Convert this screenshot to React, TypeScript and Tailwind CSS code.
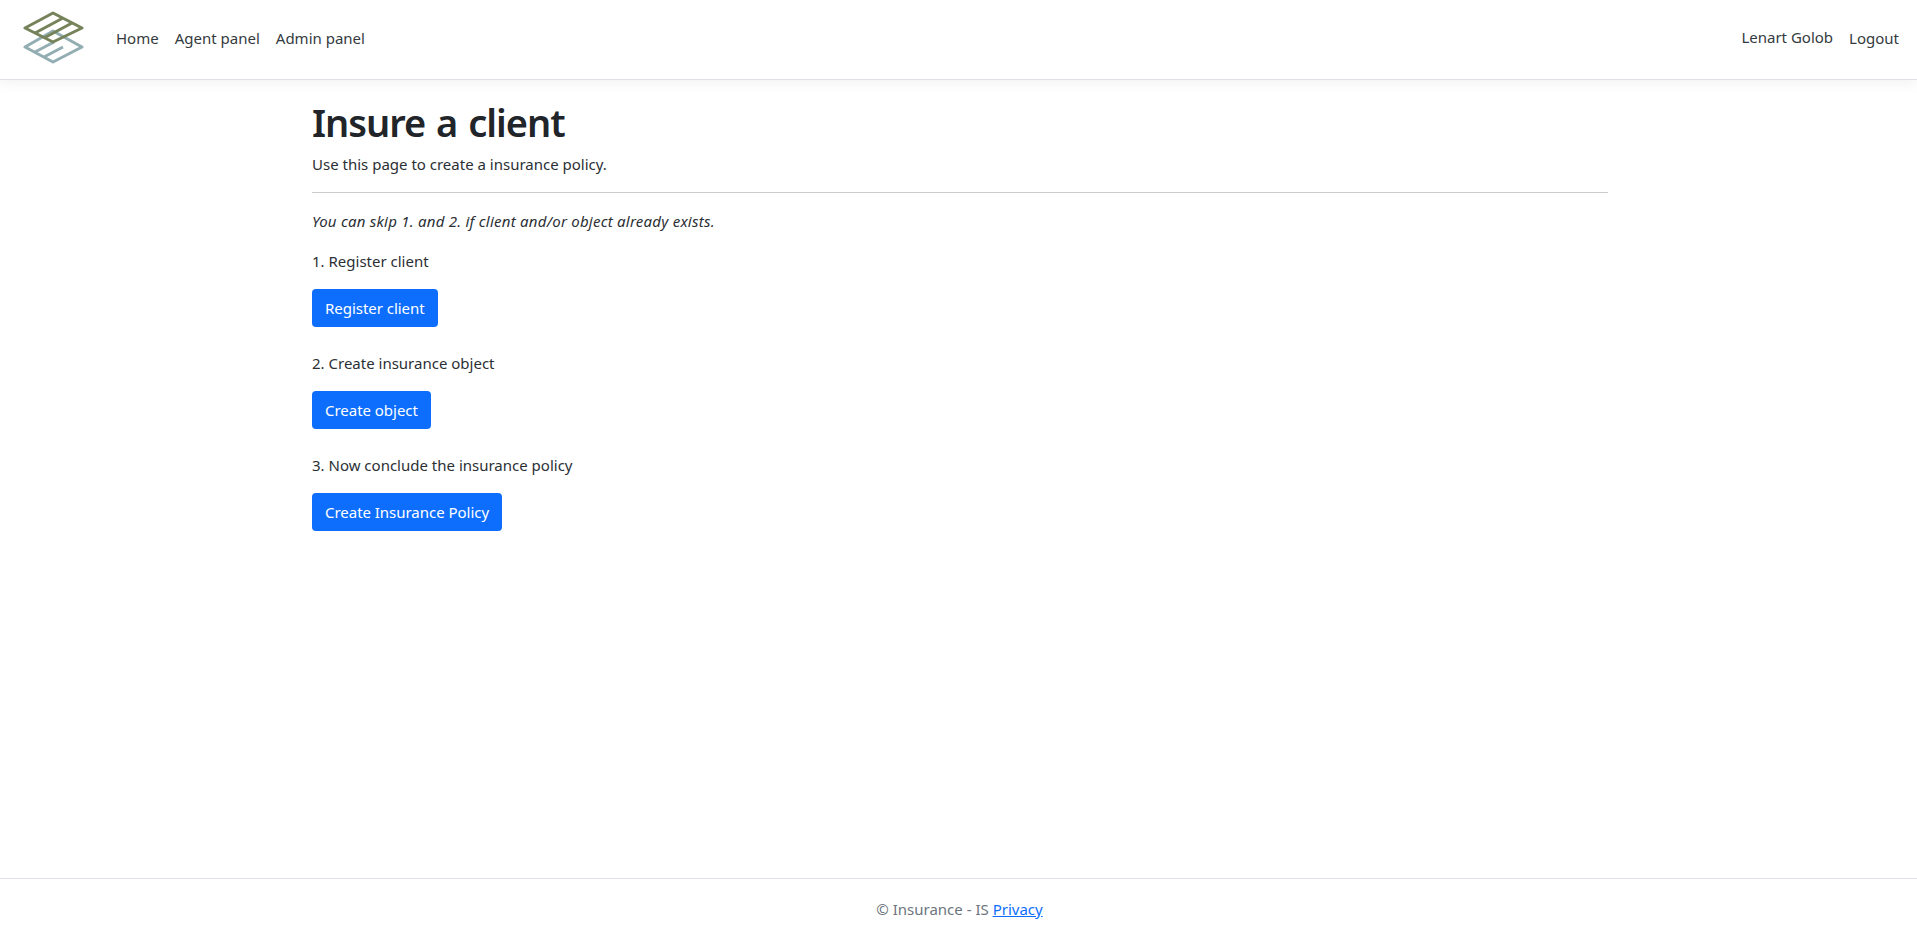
export default function App() {
  const Btn = ({ children }: { children: string }) => (
    <button className="block h-[38px] px-[13px] rounded-[4px] bg-[#0d6efd] text-white text-[15px] leading-[22px] tracking-[-0.03px]">{children}</button>
  );
  return (
    <div className="relative h-[937px] overflow-hidden bg-white text-[15px] leading-[22px] text-[#2b3035] font-['Noto_Sans','Open_Sans',sans-serif]">
      <header className="h-[80px] flex items-center bg-white border-b border-[#dee2e6] shadow-[0_4px_12px_rgba(0,0,0,0.05)] pl-[22px] pr-[18px]">
        <svg width="62" height="54" viewBox="0 0 62 54" className="mt-[-4px] shrink-0 ml-[1px]" fill="none" strokeWidth="3" strokeLinejoin="round">
          <g stroke="#93aeb3">
            <path d="M30 20 L59 36 L30 51 L2 36 Z" />
            <path d="M12 41 L31 31 M21 46 L40 36" />
          </g>
          <g stroke="#75825a">
            <path d="M30 2 L59 17 L30 31 L2 17 Z" />
            <path d="M40 7 L12 22 M49 12 L21 27" />
          </g>
        </svg>
        <nav className="flex ml-[31px] gap-[16px] text-[#343a40] mt-[-3px]">
          <a>Home</a>
          <a>Agent panel</a>
          <a>Admin panel</a>
        </nav>
        <div className="ml-auto flex gap-[16px] text-[#343a40] mt-[-3px]">
          <span className="mt-[-1px]">Lenart Golob</span>
          <a>Logout</a>
        </div>
      </header>
      <main className="w-[1296px] ml-[312px]">
        <h1 className="text-[38px] leading-[48px] font-semibold mt-[18px] tracking-[-1px] [word-spacing:2px] text-[#212529]">Insure a client</h1>
        <p className="mt-[7px]">Use this page to create a insurance policy.</p>
        <hr className="mt-[17px] border-t border-[#cccccc]" />
        <p className="mt-[17px] italic tracking-[0.24px]">You can skip 1. and 2. if client and/or object already exists.</p>
        <p className="mt-[18px]">1. Register client</p>
        <div className="mt-[17px]"><Btn>Register client</Btn></div>
        <p className="mt-[25px]">2. Create insurance object</p>
        <div className="mt-[17px]"><Btn>Create object</Btn></div>
        <p className="mt-[25px]">3. Now conclude the insurance policy</p>
        <div className="mt-[17px]"><Btn>Create Insurance Policy</Btn></div>
      </main>
      <footer className="absolute left-0 right-0 top-[878px] h-[59px] border-t border-[#dee2e6] pt-[19px] text-center text-[#6c757d] pl-[2px]">
        © Insurance - IS <a className="text-[#0d6efd] underline">Privacy</a>
      </footer>
    </div>
  );
}
